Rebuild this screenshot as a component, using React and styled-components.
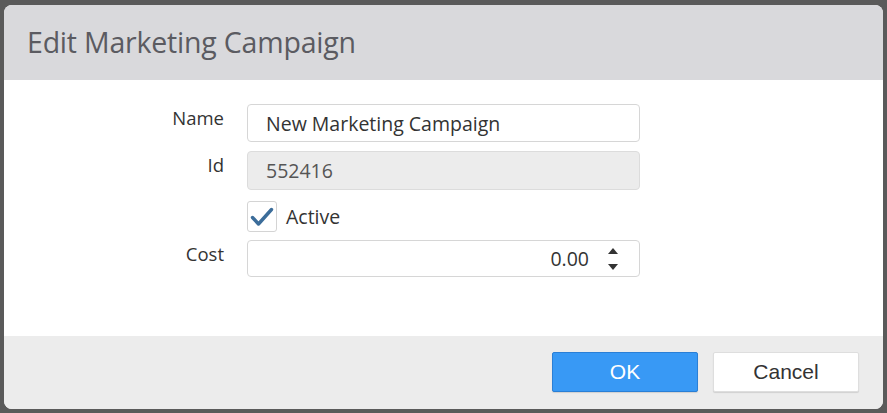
import React from "react";
import styled, { createGlobalStyle } from "styled-components";

const Global = createGlobalStyle`
  html, body { margin: 0; padding: 0; background: #5a5a5a; }
  body { font-family: "Open Sans", "Noto Sans", sans-serif; }
  * { box-sizing: border-box; }
`;

const Screen = styled.div`
  width: 887px;
  height: 413px;
  padding: 5px 4px 4px 4px;
  background: #5a5a5a;
`;

const Dialog = styled.div`
  width: 879px;
  height: 404px;
  border-radius: 8px;
  overflow: hidden;
  background: #fff;
  display: flex;
  flex-direction: column;
`;

const Header = styled.div`
  height: 75px;
  flex: none;
  background: #d9d9dc;
  display: flex;
  align-items: center;
  padding: 0 0 2px 23px;
`;

const Title = styled.h1`
  margin: 0;
  font-family: "Open Sans", "Noto Sans", sans-serif;
  font-weight: 400;
  font-size: 28.5px;
  color: #5b5b61;
  letter-spacing: -0.2px;
`;

const Body = styled.div`
  flex: 1;
  padding-top: 24px;
`;

const Form = styled.div`
  display: grid;
  grid-template-columns: 220px 393px;
  column-gap: 23px;
  align-items: start;
`;

const Label = styled.div`
  text-align: right;
  font-size: 18.5px;
  line-height: 28px;
  color: #333;
`;

const Field = styled.div`
  height: ${(p) => p.$h || 38}px;
  margin-bottom: ${(p) => p.$mb || 0}px;
  border: 1px solid ${(p) => (p.$disabled ? "#dcdcdc" : "#d6d6d6")};
  border-radius: 4px;
  background: ${(p) => (p.$disabled ? "#ececec" : "#fff")};
  display: flex;
  align-items: center;
  padding: 0 18px;
  font-size: 19.5px;
  color: ${(p) => (p.$disabled ? "#555" : "#333")};
`;

const NumberField = styled(Field)`
  justify-content: flex-end;
  padding: 0 21px 0 18px;
  gap: 19px;
`;

const CheckRow = styled.div`
  display: flex;
  align-items: center;
  gap: 9px;
  height: 31px;
  margin-bottom: 8px;
  font-size: 19.5px;
  color: #333;
`;

const Box = styled.div`
  width: 30px;
  height: 31px;
  border: 1px solid #d4d4d4;
  border-radius: 3px;
  background: #fff;
  display: flex;
  align-items: center;
  justify-content: center;
`;

const Spinner = styled.div`
  display: flex;
  flex-direction: column;
  gap: 10px;
  align-items: center;
`;

const Footer = styled.div`
  height: 73px;
  flex: none;
  background: #ececec;
  display: flex;
  justify-content: flex-end;
  align-items: flex-start;
  gap: 15px;
  padding: 16px 24px 0 0;
`;

const Button = styled.button`
  width: 146px;
  height: 40px;
  border-radius: 2px;
  font-family: "Liberation Sans", Arial, sans-serif;
  font-size: 21px;
  cursor: pointer;
  border: 1px solid ${(p) => (p.$primary ? "#2a7fd6" : "#dedede")};
  background: ${(p) => (p.$primary ? "#3899f5" : "#fff")};
  color: ${(p) => (p.$primary ? "#fff" : "#333")};
  box-shadow: 0 1px 1px rgba(0, 0, 0, 0.12);
`;

export default function App() {
  return (
    <>
      <Global />
      <Screen>
        <Dialog>
          <Header>
            <Title>Edit Marketing Campaign</Title>
          </Header>
          <Body>
            <Form>
              <Label>Name</Label>
              <Field $mb={9}>New Marketing Campaign</Field>
              <Label>Id</Label>
              <Field $disabled $h={39} $mb={11}>552416</Field>
              <div />
              <CheckRow>
                <Box>
                  <svg width="24" height="20" viewBox="0 0 24 20">
                    <path d="M2.5 10.5 L8.5 17 L21.5 2.5" fill="none" stroke="#3c6d9a" strokeWidth="3.4" strokeLinecap="round" strokeLinejoin="round" />
                  </svg>
                </Box>
                Active
              </CheckRow>
              <Label>Cost</Label>
              <NumberField $h={37}>
                0.00
                <Spinner>
                  <svg width="10" height="6" viewBox="0 0 10 6"><path d="M5 0 L10 6 L0 6 Z" fill="#333" /></svg>
                  <svg width="10" height="6" viewBox="0 0 10 6"><path d="M0 0 L10 0 L5 6 Z" fill="#333" /></svg>
                </Spinner>
              </NumberField>
            </Form>
          </Body>
          <Footer>
            <Button $primary>OK</Button>
            <Button>Cancel</Button>
          </Footer>
        </Dialog>
      </Screen>
    </>
  );
}
